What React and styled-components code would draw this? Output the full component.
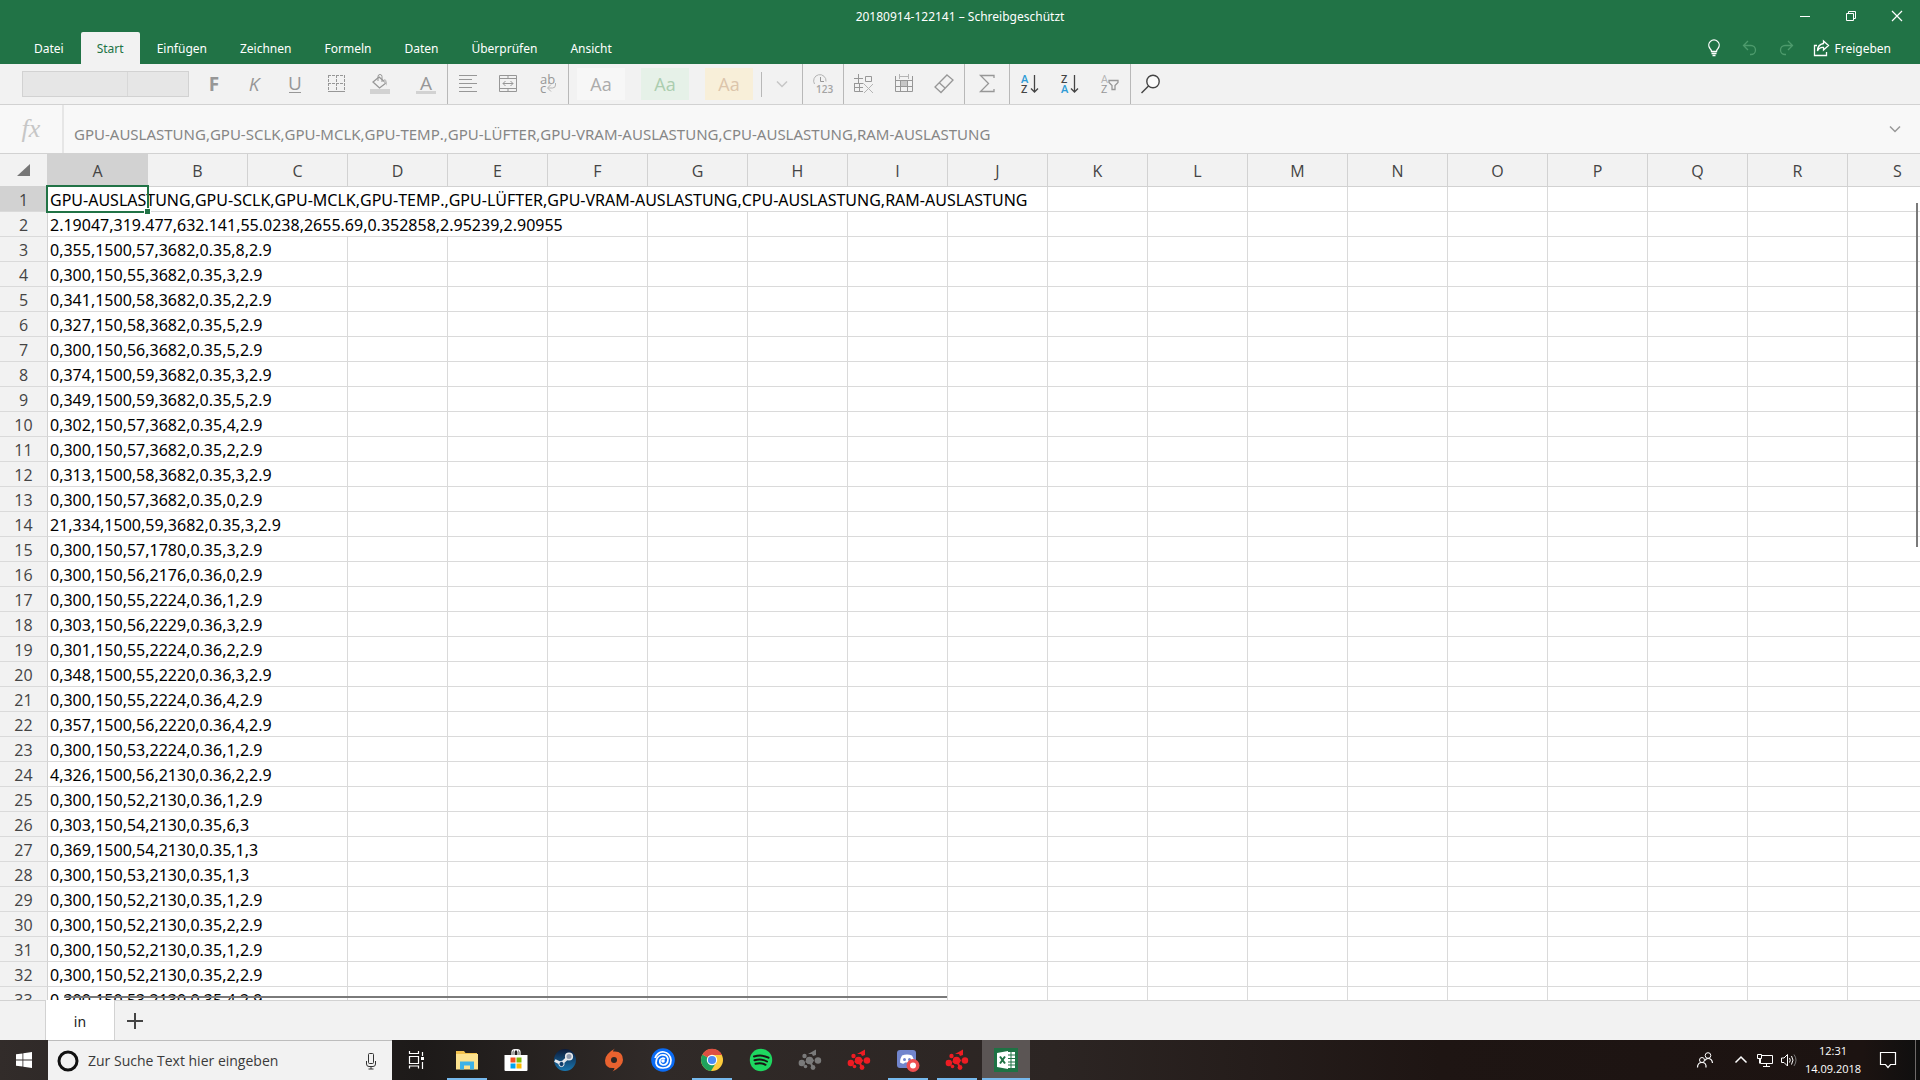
import React, { useState } from 'react';
import styled, { createGlobalStyle } from 'styled-components';

const GlobalStyle = createGlobalStyle`
  * {
    box-sizing: border-box;
  }
  body {
    margin: 0;
    overflow: hidden;
    font-family: "Open Sans", "Noto Sans", sans-serif;
  }
  button, input, select {
    font-family: inherit;
    margin: 0;
    padding: 0;
    border: none;
    border-radius: 0;
    background: none;
    color: inherit;
  }
  svg {
    display: block;
    flex: none;
    overflow: visible;
  }
`;

const Window = styled.div`
  display: flex;
  flex-direction: column;
  height: 100vh;
  background: #f2f2f2;
`;

const TitleBar = styled.header`
  display: grid;
  grid-template-columns: 1fr auto 1fr;
  align-items: center;
  height: 32px;
  background: #217346;
  color: #fff;
  font-family: "Noto Sans", sans-serif;
  font-size: 12px;
`;

const Title = styled.div`
  grid-column: 2;
`;

const WindowButtons = styled.div`
  display: flex;
  justify-content: flex-end;
`;

const WindowButton = styled.button`
  display: flex;
  align-items: center;
  justify-content: center;
  width: 46px;
  height: 32px;
`;

const MenuBar = styled.nav`
  display: flex;
  gap: 1px;
  height: 32px;
  padding-left: 18px;
  background: #217346;
  color: #fff;
  font-family: "Noto Sans", sans-serif;
`;

const MenuTab = styled.button`
  padding: 0 16px;
  font-size: 12px;
  border-radius: 2px 2px 0 0;
  background: ${(p) => (p.$active ? '#f2f2f2' : 'transparent')};
  color: ${(p) => (p.$active ? '#217346' : '#fff')};
`;

const MenuRight = styled.div`
  display: flex;
  margin-left: auto;
  padding-right: 29px;
`;

const MenuButton = styled.button`
  display: flex;
  align-items: center;
  justify-content: center;
  gap: 4px;
  min-width: 36px;
  font-size: 12px;
  color: ${(p) => (p.disabled ? '#4d9a6c' : '#fff')};
`;

const ShareButton = styled(MenuButton)`
  margin-left: 8px;
`;

const Toolbar = styled.div`
  display: flex;
  height: 41px;
  padding-left: 22px;
  border-bottom: 1px solid #d2d2d2;
  background: #f2f2f2;
  color: #979797;
`;

const FontBoxes = styled.div`
  display: flex;
  align-self: center;
  height: 26px;
  margin-right: 5px;
  border: 1px solid #d2d2d2;
  background: #e6e6e6;
`;

const FontSelect = styled.select`
  appearance: none;
  width: ${(p) => p.$width}px;
  & + & {
    border-left: 1px solid #d2d2d2;
  }
`;

const ToolButton = styled.button`
  display: flex;
  align-items: center;
  justify-content: center;
  width: ${(p) => p.$width || 40}px;
  font-size: 19px;
`;

const Separator = styled.div`
  width: 1px;
  height: ${(p) => (p.$short ? '25px' : '100%')};
  align-self: center;
  background: #b8b8b8;
`;

const StyleButton = styled.button`
  width: 48px;
  height: 32px;
  margin: 0 8px;
  align-self: center;
  font-size: 18px;
  background: ${(p) => p.$bg};
  color: ${(p) => p.$color};
`;

const FormulaBar = styled.div`
  display: flex;
  height: 49px;
  border-bottom: 1px solid #d2d2d2;
  background: #f8f8f8;
  color: #868686;
`;

const FxButton = styled.button`
  flex: none;
  width: 64px;
  border-right: 2px solid #e6e6e6;
  color: #c6c6c6;
  font-family: "Liberation Serif", serif;
  font-style: italic;
  font-size: 26px;
`;

const FormulaInput = styled.input`
  flex: 1;
  min-width: 0;
  padding: 9px 10px 0;
  font-family: "Noto Sans", sans-serif;
  font-size: 15px;
  font-kerning: none;
  outline: none;
`;

const ExpandButton = styled.button`
  display: flex;
  align-items: center;
  justify-content: center;
  width: 50px;
`;

const SheetArea = styled.main`
  position: relative;
  flex: 1;
  min-height: 0;
  overflow: hidden;
  background: #fff;
`;

const Sheet = styled.table`
  width: 1948px;
  table-layout: fixed;
  border-collapse: separate;
  border-spacing: 0;
`;

const Corner = styled.th`
  height: 33px;
  padding: 0 17px 0 0;
  background: #f2f2f2;
  border-right: 1px solid #d2d2d2;
  border-bottom: 1px solid #d2d2d2;
  svg {
    margin-left: auto;
  }
`;

const ColHead = styled.th`
  padding: 2px 0 0;
  font-size: 16px;
  font-weight: 400;
  color: #444;
  background: ${(p) => (p.$active ? '#d2d2d2' : '#f2f2f2')};
  border-right: 1px solid #d2d2d2;
  border-bottom: 1px solid #d2d2d2;
`;

const RowHead = styled.th`
  height: 25px;
  padding: 2px 0 0;
  font-size: 16px;
  line-height: 22px;
  font-weight: 400;
  color: #444;
  background: ${(p) => (p.$active ? '#d2d2d2' : '#f2f2f2')};
  border-right: 1px solid #d2d2d2;
  border-bottom: 1px solid #dadada;
`;

const Cell = styled.td`
  position: relative;
  height: 25px;
  padding: 2px 0 0 2px;
  font-family: "Noto Sans", sans-serif;
  font-size: 16px;
  font-kerning: none;
  line-height: 22px;
  white-space: nowrap;
  color: #000;
  border-right: 1px solid #dadada;
  border-bottom: 1px solid #dadada;
`;

const Selection = styled.div`
  position: absolute;
  top: -2px;
  left: -2px;
  width: 103px;
  height: 28px;
  border: 2px solid #217346;
  &::after {
    content: '';
    position: absolute;
    right: -3px;
    bottom: -3px;
    width: 5px;
    height: 5px;
    background: #217346;
    outline: 1px solid #fff;
  }
`;

const VerticalThumb = styled.div`
  position: absolute;
  top: 49px;
  right: 2px;
  width: 2px;
  height: 344px;
  background: #7a7a7a;
`;

const HorizontalThumb = styled.div`
  position: absolute;
  left: 64px;
  bottom: 2px;
  width: 46%;
  height: 2px;
  background: #7a7a7a;
`;

const SheetTabs = styled.div`
  display: flex;
  height: 40px;
  padding-left: 45px;
  background: #f2f2f2;
  box-shadow: inset 0 1px #d2d2d2;
`;

const SheetTab = styled.button`
  width: 70px;
  padding-top: 2px;
  border: 1px solid #d2d2d2;
  border-width: 0 1px;
  background: #fff;
  color: #222;
  font-family: "Noto Sans", sans-serif;
  font-size: 14px;
`;

const AddSheet = styled.button`
  display: flex;
  align-items: center;
  justify-content: center;
  width: 40px;
  padding-top: 2px;
`;

const Taskbar = styled.footer`
  display: flex;
  height: 40px;
  background: linear-gradient(90deg, #322c2a 0, #1d1a19 22%, #302a28 34%, #2c2523 55%, #1e1513 75%, #1c1311 97%, #0f0f0f 100%);
  color: #fff;
`;

const StartButton = styled.button`
  display: flex;
  align-items: center;
  justify-content: center;
  width: 48px;
`;

const SearchBox = styled.label`
  display: flex;
  align-items: center;
  width: 344px;
  padding: 0 12px 0 9px;
  border-top: 1px solid #bdbdbd;
  background: #f2f2f2;
  color: #333;
`;

const SearchInput = styled.input`
  flex: 1;
  min-width: 0;
  padding-left: 9px;
  font-size: 14px;
  outline: none;
  &::placeholder {
    color: #3a3a3a;
    opacity: 1;
  }
`;

const TaskButtons = styled.div`
  display: flex;
  gap: 1px;
`;

const TaskButton = styled.button`
  display: flex;
  align-items: center;
  justify-content: center;
  width: 48px;
  height: 40px;
  background: ${(p) => (p.$active ? '#5b5554' : 'transparent')};
  background-image: ${(p) => (p.$open || p.$active ? 'linear-gradient(#76b9ed, #76b9ed)' : 'none')};
  background-repeat: no-repeat;
  background-position: bottom;
  background-size: ${(p) => (p.$active ? '48px 2px' : '40px 2px')};
`;

const TaskViewButton = styled(TaskButton)`
  margin-right: 2px;
`;

const Tray = styled.div`
  display: flex;
  margin-left: auto;
`;

const TrayButton = styled.button`
  display: flex;
  align-items: center;
  justify-content: center;
  width: ${(p) => p.$width || 24}px;
`;

const Clock = styled.div`
  width: 64px;
  padding-top: 2px;
  text-align: center;
  font-size: 11px;
  line-height: 18px;
`;

const ShowDesktop = styled.button`
  width: 5px;
  margin-left: 4px;
  border-left: 1px solid #6e6a69;
`;

const menu = ['Datei', 'Start', 'Einfügen', 'Zeichnen', 'Formeln', 'Daten', 'Überprüfen', 'Ansicht'];

const columns = 'ABCDEFGHIJKLMNOPQRS'.split('');

const rows = [
  'GPU-AUSLASTUNG,GPU-SCLK,GPU-MCLK,GPU-TEMP.,GPU-LÜFTER,GPU-VRAM-AUSLASTUNG,CPU-AUSLASTUNG,RAM-AUSLASTUNG',
  '2.19047,319.477,632.141,55.0238,2655.69,0.352858,2.95239,2.90955',
  '0,355,1500,57,3682,0.35,8,2.9',
  '0,300,150,55,3682,0.35,3,2.9',
  '0,341,1500,58,3682,0.35,2,2.9',
  '0,327,150,58,3682,0.35,5,2.9',
  '0,300,150,56,3682,0.35,5,2.9',
  '0,374,1500,59,3682,0.35,3,2.9',
  '0,349,1500,59,3682,0.35,5,2.9',
  '0,302,150,57,3682,0.35,4,2.9',
  '0,300,150,57,3682,0.35,2,2.9',
  '0,313,1500,58,3682,0.35,3,2.9',
  '0,300,150,57,3682,0.35,0,2.9',
  '21,334,1500,59,3682,0.35,3,2.9',
  '0,300,150,57,1780,0.35,3,2.9',
  '0,300,150,56,2176,0.36,0,2.9',
  '0,300,150,55,2224,0.36,1,2.9',
  '0,303,150,56,2229,0.36,3,2.9',
  '0,301,150,55,2224,0.36,2,2.9',
  '0,348,1500,55,2220,0.36,3,2.9',
  '0,300,150,55,2224,0.36,4,2.9',
  '0,357,1500,56,2220,0.36,4,2.9',
  '0,300,150,53,2224,0.36,1,2.9',
  '4,326,1500,56,2130,0.36,2,2.9',
  '0,300,150,52,2130,0.36,1,2.9',
  '0,303,150,54,2130,0.35,6,3',
  '0,369,1500,54,2130,0.35,1,3',
  '0,300,150,53,2130,0.35,1,3',
  '0,300,150,52,2130,0.35,1,2.9',
  '0,300,150,52,2130,0.35,2,2.9',
  '0,300,150,52,2130,0.35,1,2.9',
  '0,300,150,52,2130,0.35,2,2.9',
  '0,300,150,53,2130,0.35,4,2.9',
];

// how many columns the text of a row runs over
const getSpan = (index) => {
  if (index === 0) return 10;
  if (index === 1) return 6;
  return 3;
};

const Icon = ({ size = 24, children }) => (
  <svg width={size} height={size} viewBox={`0 0 ${size} ${size}`} fill="none" stroke="currentColor" aria-hidden="true">
    {children}
  </svg>
);

const Letter = ({ x, y, size, color = 'currentColor', children, ...rest }) => (
  <text x={x} y={y} fontSize={size} fill={color} stroke="none" fontFamily="Open Sans, sans-serif" {...rest}>
    {children}
  </text>
);

const BordersIcon = () => (
  <Icon>
    <path d="M4.500 3v16M20.500 3v16M12.500 3v16M4 3.500h17M4 11.500h17" strokeDasharray="3 1" />
    <path d="M4 19.500h17" />
  </Icon>
);

const FillIcon = () => (
  <Icon>
    <rect x="2" y="17" width="20" height="5" fill="#d2d2d2" stroke="none" />
    <path d="M11 5l7 6-6.500 5L5 10z" strokeWidth="1.300" />
    <path d="M10 9V4.500a2 2 0 0 1 4 0V10" />
    <path d="M16 7q3.500 0 3 7q-1-3-3-4z" fill="#c2c2c2" stroke="none" />
  </Icon>
);

const FontColorIcon = () => (
  <Icon>
    <Letter x="12" y="18" size="19" textAnchor="middle">A</Letter>
    <rect x="2" y="19" width="20" height="3" fill="#d2d2d2" stroke="none" />
  </Icon>
);

const UnderlineIcon = () => (
  <Icon>
    <Letter x="12" y="18" size="19" textAnchor="middle">U</Letter>
    <path d="M6 20.500h12" />
  </Icon>
);

const AlignIcon = () => (
  <Icon>
    <path d="M3 3.500h18M3 7.500h13M3 11.500h18M3 15.500h13M3 19.500h18" />
  </Icon>
);

const MergeIcon = () => (
  <Icon>
    <path d="M3.500 3.500h17v16h-17zM3.500 6.500h17M3.500 16.500h17M12 3.500v3M12 16.500v3" />
    <path d="M7 11.500h10M9.500 9L7 11.500l2.500 2.500M14.500 9l2.500 2.500-2.500 2.500" />
  </Icon>
);

const WrapIcon = () => (
  <Icon>
    <Letter x="4" y="12" size="13">ab</Letter>
    <Letter x="4" y="21" size="13">c</Letter>
    <path d="M19.500 11v2q0 3-3 3H12M15 12.500L11.500 16l3.500 3.500" stroke="#b4b4b4" />
  </Icon>
);

const NumberIcon = () => (
  <Icon>
    <path d="M3.500 12A6.200 6.200 0 1 1 15 9.500" stroke="#b4b4b4" />
    <path d="M9.500 5v4.500H13" />
    <Letter x="5" y="21" size="10" fontWeight="600" color="#a4a4a4">123</Letter>
  </Icon>
);

const InsertDeleteIcon = () => (
  <Icon>
    <path d="M6.500 2v9M2 6.500h9M13.500 4.500h6v5h-6zM2.500 11v8.500H11M2.500 15.500H11M7.500 11v8.500M2.500 11.500h9" />
    <path d="M12 12l9 9M21 12l-9 9" stroke="#b4b4b4" />
  </Icon>
);

const CellSizeIcon = () => (
  <Icon>
    <path d="M3.500 4v15.500h17V4M3.500 8.500h17M3.500 14.500h17M8.500 8.500v11M15.500 8.500v11" />
    <rect x="9" y="9" width="6" height="5" fill="#c6c6c6" stroke="none" />
    <path d="M7.500 2v5M16.500 2v5M8 4.500h8" stroke="#b4b4b4" />
  </Icon>
);

const EraserIcon = () => (
  <Icon>
    <path d="M15 3l6 5L9 20.500l-6-5.500zM7 10.500l6 5.500" strokeWidth="1.300" />
  </Icon>
);

const SumIcon = () => (
  <Icon>
    <path d="M19 6V3.500H5.500l8 8-8 8H19V17" strokeWidth="1.300" />
  </Icon>
);

const SortIcon = ({ top, bottom }) => (
  <Icon>
    <Letter x="3" y="11" size="11" fontWeight="600" color={top === 'A' ? '#2e9bd6' : '#444'}>{top}</Letter>
    <Letter x="3" y="21" size="11" fontWeight="600" color={bottom === 'A' ? '#2e9bd6' : '#444'}>{bottom}</Letter>
    <path d="M16.500 3v17M13 16.500l3.500 3.500 3.500-3.500" stroke="#444" strokeWidth="1.300" />
  </Icon>
);

const FilterIcon = () => (
  <Icon>
    <Letter x="3" y="11" size="11" color="#b4b4b4">A</Letter>
    <Letter x="3" y="21" size="11">Z</Letter>
    <path d="M11 8.500h9v2l-3 3v4h-3v-4l-3-3z" strokeWidth="1.300" />
  </Icon>
);

const SearchIcon = () => (
  <Icon>
    <circle cx="14" cy="9.500" r="6.200" fill="#fafafa" stroke="#444" strokeWidth="1.400" />
    <path d="M9.500 14L2.500 21" stroke="#444" strokeWidth="1.400" />
  </Icon>
);

const ChevronIcon = ({ up, color }) => (
  <Icon size={16}>
    <path d={up ? 'M2.500 10.500L8 5l5.500 5.500' : 'M3 5.500l5 5 5-5'} stroke={color} strokeWidth="1.500" />
  </Icon>
);

const UndoIcon = () => (
  <Icon size={18}>
    <path d="M7 2L2.500 6.500 7 11M2.500 6.500H10a4.500 4.500 0 0 1 0 9H9" strokeWidth="1.300" />
  </Icon>
);

const RedoIcon = () => (
  <Icon size={18}>
    <path d="M11 2l4.500 4.500L11 11M15.500 6.500H8a4.500 4.500 0 0 0 0 9h1" strokeWidth="1.300" />
  </Icon>
);

const BulbIcon = () => (
  <Icon size={18}>
    <path d="M6.500 12.500q0-1.500-1.500-3a5.200 5.200 0 1 1 8 0q-1.500 1.500-1.500 3zM6.500 14.500h5M7.500 16.500h3" strokeWidth="1.300" />
  </Icon>
);

const ShareIcon = () => (
  <Icon size={18}>
    <path d="M5 6.500H2.500v10h12V13" strokeWidth="1.300" />
    <path d="M11.500 2l5 4.500-5 4.500V8.500q-4-.5-6 3.500 0-6.500 6-7.500z" strokeWidth="1.300" />
  </Icon>
);

const ExplorerIcon = () => (
  <Icon>
    <path d="M1 3h8l1.500 2H22v16H1z" fill="#f2c24e" stroke="none" />
    <path d="M1 6h22v15.500H1z" fill="#fce28f" stroke="none" />
    <path d="M5 21.500v-8h14v8h-4v-4H9v4z" fill="#3cb2e8" stroke="none" />
  </Icon>
);

const StoreIcon = () => (
  <Icon>
    <path d="M8 7V4q0-2.500 3-2.500T14 4v3M10 7V4q0-2.500 3-2.500T16 4v3" strokeWidth="1.200" />
    <path d="M.5 7h23v15q0 1-1 1h-21q-1 0-1-1z" fill="#fff" stroke="none" />
    <path d="M6.500 9.500h5v5h-5z" fill="#f25022" stroke="none" />
    <path d="M12.500 9.500h5v5h-5z" fill="#7fba00" stroke="none" />
    <path d="M6.500 15.500h5v5h-5z" fill="#00a4ef" stroke="none" />
    <path d="M12.500 15.500h5v5h-5z" fill="#ffb900" stroke="none" />
  </Icon>
);

const SteamIcon = () => (
  <Icon>
    <defs>
      <linearGradient id="steam" x1="0" y1="0" x2="0" y2="1">
        <stop offset="0" stopColor="#0b1a3a" />
        <stop offset="1" stopColor="#1a77b0" />
      </linearGradient>
    </defs>
    <circle cx="12" cy="12" r="11" fill="url(#steam)" stroke="none" />
    <path d="M1.800 12.500l6.500 3.200 6-5.500" stroke="#e6e8ec" strokeWidth="3" />
    <circle cx="8.500" cy="16" r="2.600" fill="#0f3d6b" stroke="#e6e8ec" />
    <circle cx="16" cy="8.500" r="3.300" fill="#8f9bb0" stroke="#e6e8ec" strokeWidth="1.600" />
  </Icon>
);

const OriginIcon = () => (
  <Icon>
    <path d="M13 .5q-2 1.500-2 3 10-1 10 8.500 0 6-10.500 11.500 2-2 2-3.500Q3 21 3 12.500 3 6 13 .500z" fill="#e8622f" stroke="none" />
    <circle cx="12" cy="12" r="3" fill="#2b2624" stroke="none" />
  </Icon>
);

const UplayIcon = () => (
  <Icon>
    <circle cx="12" cy="12" r="11.800" fill="#0a6cf5" stroke="none" />
    <path d="M4 10Q7 3 13 4t7 8q0 8-8 8-6 0-7-5 0-6 5-8 6-1 7 4 0 6-5 6-4-1-3-5 2-3 5-1" stroke="#fff" strokeWidth="1.700" />
    <circle cx="12" cy="13" r="1.800" fill="#fff" stroke="none" />
  </Icon>
);

const ChromeIcon = () => (
  <Icon>
    <circle cx="12" cy="12" r="11" fill="#fccb3c" stroke="none" />
    <path d="M12 12L2.500 6.500A11 11 0 0 0 11 23l5.500-9z" fill="#1fa15d" stroke="none" />
    <path d="M12 12L2.500 6.500A11 11 0 0 1 22 7H12z" fill="#dd4f43" stroke="none" />
    <circle cx="12" cy="12" r="5.200" fill="#fff" stroke="none" />
    <circle cx="12" cy="12" r="4.100" fill="#4b8bf4" stroke="none" />
  </Icon>
);

const SpotifyIcon = () => (
  <Icon>
    <circle cx="12" cy="12" r="11.200" fill="#1ed760" stroke="none" />
    <path d="M5 8.500q8-2.300 14.500 1.200M5.500 12.300q7-2 12.500 1.200M6.500 15.800q6-1.500 10 1" stroke="#191414" strokeWidth="2" strokeLinecap="round" />
  </Icon>
);

// cluster of dots, used by the graphics driver tools
const ClusterIcon = ({ color }) => (
  <Icon>
    <g fill={color} stroke="none">
      <circle cx="11.500" cy="12.500" r="3.800" />
      <circle cx="20" cy="12.500" r="3.200" />
      <circle cx="3.800" cy="15" r="3.200" />
      <circle cx="6.500" cy="8" r="2.200" />
      <circle cx="15" cy="19.500" r="2.400" />
      <circle cx="7.500" cy="18.500" r="1.800" />
      <path d="M10 6l8-4.500V7l-3 1-1-2z" />
    </g>
    <path d="M11.500 12.500H20M11.500 12.500L4 15M11.500 12.500l3.500 7" stroke={color} strokeWidth="2" />
    <path d="M7.300 11q-.8 3 1 5M15.700 10q1.500 2.500 0 5" stroke="#2b2423" strokeWidth="0.800" />
  </Icon>
);

const DiscordIcon = () => (
  <Icon>
    <rect x="1" y="2" width="19" height="18" rx="3" fill="#7185cd" stroke="none" />
    <path d="M6 7.500q5-2 10 0 2 3 2 7-2 1.500-4 1l-1-1H9l-1 1q-2 .5-4-1 0-4 2-7z" fill="#fff" stroke="none" />
    <circle cx="8.500" cy="11.500" r="1.500" fill="#7185cd" stroke="none" />
    <circle cx="13.500" cy="11.500" r="1.500" fill="#7185cd" stroke="none" />
    <circle cx="17" cy="17.500" r="6.500" fill="#ee4e50" stroke="none" />
    <circle cx="17" cy="17.500" r="3" fill="#fff" stroke="none" />
  </Icon>
);

const ExcelIcon = () => (
  <Icon>
    <rect width="24" height="24" fill="#1f7244" stroke="none" />
    <path d="M13 4h8v16h-8z" fill="#fff" stroke="none" />
    <path d="M13 7h8M13 10.500h8M13 14h8M13 17h8M17 4v16" stroke="#1f7244" />
    <path d="M3 5l11-2v18L3 19z" fill="#fff" stroke="none" />
    <path d="M6 8.500l5 7M11 8.500l-5 7" stroke="#1f7244" strokeWidth="2" />
  </Icon>
);

const TaskViewIcon = () => (
  <Icon>
    <path d="M5.500 8.500h9v7h-9zM5.500 3v2.500h9V3M5.500 20.500v-2.500h9v2.500M18.500 4v4M18.500 14v7" strokeWidth="1.200" />
    <rect x="17" y="9" width="3" height="3" fill="#fff" stroke="none" />
  </Icon>
);

const apps = [
  { name: 'Explorer', icon: <ExplorerIcon />, open: true },
  { name: 'Store', icon: <StoreIcon /> },
  { name: 'Steam', icon: <SteamIcon /> },
  { name: 'Origin', icon: <OriginIcon /> },
  { name: 'Uplay', icon: <UplayIcon /> },
  { name: 'Chrome', icon: <ChromeIcon />, open: true },
  { name: 'Spotify', icon: <SpotifyIcon /> },
  { name: 'Tool', icon: <ClusterIcon color="#7a7a7a" /> },
  { name: 'Tuning', icon: <ClusterIcon color="#ee1c23" /> },
  { name: 'Discord', icon: <DiscordIcon />, open: true },
  { name: 'Monitor', icon: <ClusterIcon color="#ee1c23" />, open: true },
  { name: 'Excel', icon: <ExcelIcon />, active: true },
];

const Ribbon = () => (
  <Toolbar>
    <FontBoxes>
      <FontSelect $width={104} disabled aria-label="Schriftart" />
      <FontSelect $width={61} disabled aria-label="Schriftgrad" />
    </FontBoxes>
    <ToolButton aria-label="Fett"><b>F</b></ToolButton>
    <ToolButton aria-label="Kursiv"><i>K</i></ToolButton>
    <ToolButton $width={41} aria-label="Unterstrichen"><UnderlineIcon /></ToolButton>
    <ToolButton $width={41} aria-label="Rahmen"><BordersIcon /></ToolButton>
    <ToolButton $width={48} aria-label="Füllfarbe"><FillIcon /></ToolButton>
    <ToolButton $width={43} aria-label="Schriftfarbe"><FontColorIcon /></ToolButton>
    <Separator />
    <ToolButton aria-label="Ausrichtung"><AlignIcon /></ToolButton>
    <ToolButton aria-label="Verbinden"><MergeIcon /></ToolButton>
    <ToolButton aria-label="Textumbruch"><WrapIcon /></ToolButton>
    <Separator />
    <StyleButton $bg="#f7f7f7" $color="#ababab">Aa</StyleButton>
    <StyleButton $bg="#e6f1e8" $color="#abcdaf">Aa</StyleButton>
    <StyleButton $bg="#f8efd9" $color="#dcc5ab">Aa</StyleButton>
    <Separator $short />
    <ToolButton aria-label="Weitere Formate"><ChevronIcon color="#c6c6c6" /></ToolButton>
    <Separator />
    <ToolButton aria-label="Zahlenformat"><NumberIcon /></ToolButton>
    <Separator />
    <ToolButton aria-label="Einfügen und löschen"><InsertDeleteIcon /></ToolButton>
    <ToolButton aria-label="Zellengröße"><CellSizeIcon /></ToolButton>
    <ToolButton aria-label="Löschen"><EraserIcon /></ToolButton>
    <Separator />
    <ToolButton $width={44} aria-label="Summe"><SumIcon /></ToolButton>
    <Separator />
    <ToolButton aria-label="Aufsteigend"><SortIcon top="A" bottom="Z" /></ToolButton>
    <ToolButton aria-label="Absteigend"><SortIcon top="Z" bottom="A" /></ToolButton>
    <ToolButton aria-label="Filtern"><FilterIcon /></ToolButton>
    <Separator />
    <ToolButton aria-label="Suchen"><SearchIcon /></ToolButton>
  </Toolbar>
);

const Grid = () => (
  <SheetArea>
    <Sheet>
      <colgroup>
        <col width="48" />
        {columns.map((name) => <col key={name} width="100" />)}
      </colgroup>
      <thead>
        <tr>
          <Corner aria-label="Alles markieren">
            <svg width="13" height="12"><path d="M13 0v12H0z" fill="#777" /></svg>
          </Corner>
          {columns.map((name) => (
            <ColHead key={name} $active={name === 'A'}>{name}</ColHead>
          ))}
        </tr>
      </thead>
      <tbody>
        {rows.map((text, index) => (
          <tr key={index}>
            <RowHead $active={index === 0}>{index + 1}</RowHead>
            <Cell colSpan={getSpan(index)}>
              {text}
              {index === 0 && <Selection />}
            </Cell>
            {columns.slice(getSpan(index)).map((name) => <Cell key={name} />)}
          </tr>
        ))}
      </tbody>
    </Sheet>
    <VerticalThumb />
    <HorizontalThumb />
  </SheetArea>
);

const App = () => {
  const [tab, setTab] = useState('Start');
  const [search, setSearch] = useState('');

  return (
    <Window>
      <GlobalStyle />
      <TitleBar>
        <Title>20180914-122141 – Schreibgeschützt</Title>
        <WindowButtons>
          <WindowButton aria-label="Minimieren">
            <Icon size={12}><path d="M1 6.500h10" /></Icon>
          </WindowButton>
          <WindowButton aria-label="Verkleinern">
            <Icon size={12}><path d="M1.500 3.500h7v7h-7zM3.500 3V1.500h7v7H9" /></Icon>
          </WindowButton>
          <WindowButton aria-label="Schließen">
            <Icon size={12}><path d="M1 1l10 10M11 1L1 11" strokeWidth="1.200" /></Icon>
          </WindowButton>
        </WindowButtons>
      </TitleBar>
      <MenuBar>
        {menu.map((name) => (
          <MenuTab key={name} $active={name === tab} onClick={() => setTab(name)}>{name}</MenuTab>
        ))}
        <MenuRight>
          <MenuButton aria-label="Tipps"><BulbIcon /></MenuButton>
          <MenuButton disabled aria-label="Rückgängig"><UndoIcon /></MenuButton>
          <MenuButton disabled aria-label="Wiederholen"><RedoIcon /></MenuButton>
          <ShareButton><ShareIcon />Freigeben</ShareButton>
        </MenuRight>
      </MenuBar>
      <Ribbon />
      <FormulaBar>
        <FxButton>fx</FxButton>
        <FormulaInput readOnly aria-label="Bearbeitungsleiste" value={rows[0]} />
        <ExpandButton aria-label="Erweitern"><ChevronIcon color="#979797" /></ExpandButton>
      </FormulaBar>
      <Grid />
      <SheetTabs>
        <SheetTab>in</SheetTab>
        <AddSheet aria-label="Neues Blatt">
          <Icon size={16}><path d="M8 0v16M0 8h16" stroke="#444" strokeWidth="2" /></Icon>
        </AddSheet>
      </SheetTabs>
      <Taskbar>
        <StartButton aria-label="Start">
          <Icon size={16}>
            <path d="M0 2.300L6.500 1.400v6.200H0zM7.300 1.300L16 0v7.600H7.300zM0 8.400h6.500v6.200L0 13.700zM7.300 8.400H16V16l-8.700-1.300z" fill="#fff" stroke="none" />
          </Icon>
        </StartButton>
        <SearchBox>
          <Icon size={22}><circle cx="11" cy="11" r="9" stroke="#111" strokeWidth="3" /></Icon>
          <SearchInput
            placeholder="Zur Suche Text hier eingeben"
            value={search}
            onChange={(e) => setSearch(e.target.value)}
          />
          <Icon size={18}>
            <rect x="6.500" y="1.500" width="5" height="10" rx="1" />
            <path d="M4.500 9v3q0 2.500 2.500 2.500h4q2.500 0 2.500-2.500V9M9 14.500V17M6.500 17h5" />
          </Icon>
        </SearchBox>
        <TaskButtons>
          <TaskViewButton aria-label="Aktive Anwendungen"><TaskViewIcon /></TaskViewButton>
          {apps.map((app) => (
            <TaskButton key={app.name} $open={app.open} $active={app.active} aria-label={app.name}>
              {app.icon}
            </TaskButton>
          ))}
        </TaskButtons>
        <Tray>
          <TrayButton $width={48} aria-label="Kontakte">
            <Icon size={18}>
              <circle cx="12" cy="4.500" r="2.800" />
              <circle cx="6" cy="9" r="2.500" />
              <path d="M1.500 16.500q0-5 4.500-5t4 5M9 9.500q1-2 3-2 4 0 4.500 4.500" strokeWidth="1.200" />
            </Icon>
          </TrayButton>
          <TrayButton aria-label="Ausgeblendete Symbole"><ChevronIcon up /></TrayButton>
          <TrayButton aria-label="Netzwerk">
            <Icon size={18}><path d="M6 4.500h10.500v8H4.500V8M10.500 12.500v3M7 15.500h7M1.500 3.500h4v4h-4zM3.500 7.500v5" /></Icon>
          </TrayButton>
          <TrayButton aria-label="Lautstärke">
            <Icon size={18}>
              <path d="M1.500 7v4.500H4l3.500 3.500V3.500L4 7zM9.500 7q1.500 2.200 0 4.500M11.500 5q3 4 0 8.500" />
              <path d="M14 3.500q4 5.500 0 11.500" stroke="#777" />
            </Icon>
          </TrayButton>
          <Clock>
            <div>12:31</div>
            <div>14.09.2018</div>
          </Clock>
          <TrayButton $width={46} aria-label="Info-Center">
            <Icon size={18}><path d="M1.500 1.500h15v12h-5L9 16.500l-2.500-3h-5z" strokeWidth="1.200" /></Icon>
          </TrayButton>
          <ShowDesktop aria-label="Desktop anzeigen" />
        </Tray>
      </Taskbar>
    </Window>
  );
};

export default App;
